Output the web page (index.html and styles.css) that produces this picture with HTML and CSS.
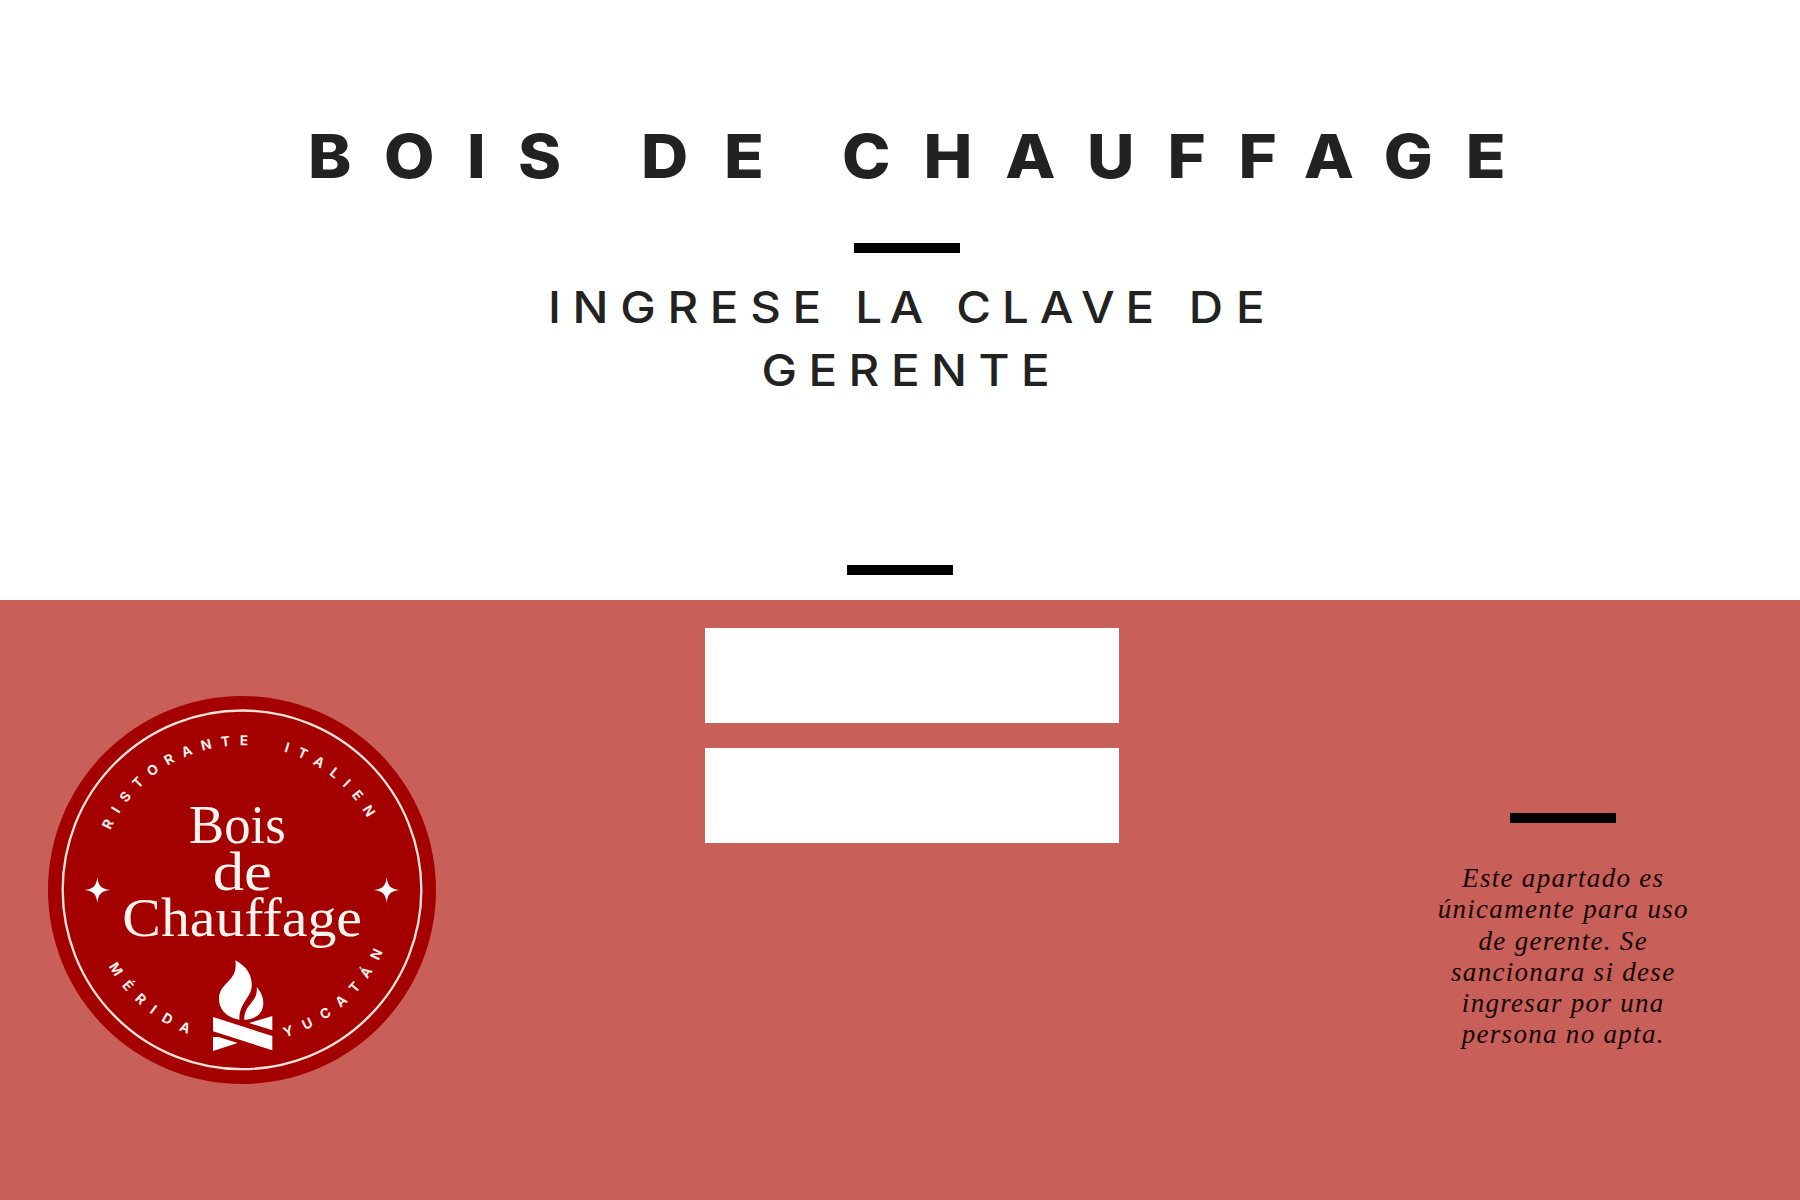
FILE: index.html
```html
<!DOCTYPE html>
<html lang="es">
<head>
<meta charset="utf-8">
<title>Bois de Chauffage</title>
<link rel="stylesheet" href="styles.css">
</head>
<body>
<main class="page">
  <header class="intro">
    <h1 class="title"><span class="title-bois">BOIS</span> <span class="title-de">DE</span> <span class="title-chauffage">CHAUFFAGE</span></h1>
    <div class="rule rule-title"></div>
    <h2 class="subtitle">
      <span class="subtitle-line"><span class="w-ingrese">INGRESE</span> <span class="w-la">LA</span> <span class="w-clave">CLAVE</span> <span class="w-de">DE</span></span>
      <span class="subtitle-line second"><span class="w-gerente">GERENTE</span></span>
    </h2>
    <div class="rule rule-form"></div>
  </header>

  <section class="panel">
    <div class="brand">
      <svg class="logo" viewBox="24 47 1164 1164" role="img" aria-label="Bois de Chauffage">
        <defs>
          <path id="arc-top" d="M172 629A434 434 0 0 1 1040 629"/>
          <path id="arc-bottom" d="M145 629A461 461 0 0 0 1067 629"/>
          <path id="star" d="M0-38C3-12 12-3 38 0C12 3 3 12 0 38C-3 12-12 3-38 0C-12-3-3-12 0-38Z"/>
        </defs>
        <circle class="disc" cx="606" cy="629" r="582"/>
        <circle class="ring" cx="606" cy="628.5" r="538"/>
        <g class="arc-text">
          <text><textPath href="#arc-top" startOffset="185" textLength="515">RISTORANTE</textPath></text>
          <text><textPath href="#arc-top" startOffset="809" textLength="328">ITALIEN</textPath></text>
          <text><textPath href="#arc-bottom" startOffset="239" textLength="319">MÉRIDA</textPath></text>
          <text><textPath href="#arc-bottom" startOffset="855" textLength="403">YUCATÁN</textPath></text>
        </g>
        <text class="name">
          <tspan x="447" y="488" textLength="290" lengthAdjust="spacingAndGlyphs">Bois</tspan>
          <tspan x="518" y="628" textLength="178" lengthAdjust="spacingAndGlyphs">de</tspan>
          <tspan x="247" y="767" textLength="719" lengthAdjust="spacingAndGlyphs">Chauffage</tspan>
        </text>
        <g class="mark">
          <use href="#star" x="172" y="629"/>
          <use href="#star" x="1040" y="629"/>
          <path d="M586 840C624 860 637 890 635 918C634 952 598 966 598 1018C556 1010 537 985 537 955C537 905 596 905 586 840Z"/>
          <path d="M650 920C674 946 674 978 662 996C652 1012 632 1016 613 1019C610 972 656 966 650 920Z"/>
          <path d="M519 1010L697 1067V1110L519 1053ZM697 1007V1050L627 1028ZM519 1070H536L593 1088L519 1112Z"/>
        </g>
      </svg>
    </div>
    <form class="fields">
      <input class="field" type="text" aria-label="Usuario">
      <input class="field" type="password" aria-label="Clave">
    </form>
    <aside class="notice">
      <div class="rule"></div>
      <p class="notice-text">Este apartado es<br>únicamente para uso<br>de gerente. Se<br>sancionara si dese<br>ingresar por una<br>persona no apta.</p>
    </aside>
  </section>
</main>
</body>
</html>
```
FILE: styles.css
```css
* { box-sizing: border-box; }
body { margin: 0; background: #fff; }

.page {
  width: 1800px;
  height: 1200px;
  display: grid;
  grid-template-rows: 600px 600px;
  overflow: hidden;
}

.rule { width: 106px; height: 9.6px; background: #000; }

/* Heading area */
.intro {
  display: flex;
  flex-direction: column;
  padding-top: 119px;
  color: #222;
  font-family: Inter, "Liberation Sans", sans-serif;
}
.title {
  display: flex;
  margin: 0 0 0 307.8px;
  font-size: 60.5px;
  line-height: 74px;
  font-weight: 800;
  transform: scaleX(1.08);
  transform-origin: 0 0;
}
.title-bois { letter-spacing: 30.1px; margin-right: 43.7px; }
.title-de { letter-spacing: 33.2px; margin-right: 39.2px; }
.title-chauffage { letter-spacing: 30.4px; }

.rule-title { margin: 50.4px 0 0 854px; }

.subtitle {
  margin: 23.2px 0 0 548px;
  font-size: 44px;
  line-height: 63px;
  font-weight: 500;
  transform: scaleX(1.08);
  transform-origin: 0 0;
}
.subtitle-line { display: flex; }
.subtitle-line.second { padding-left: 197.6px; }
.w-ingrese { letter-spacing: 10.8px; margin-right: 20.8px; }
.w-la { letter-spacing: 6.7px; margin-right: 24px; }
.w-clave { letter-spacing: 10.1px; margin-right: 21.8px; }
.w-de { letter-spacing: 12px; }
.w-gerente { letter-spacing: 10.65px; }

.rule-form { margin: auto 0 25px 847px; }

/* Red panel */
.panel {
  display: grid;
  grid-template-columns: 704.7px 414.8px 1fr;
  background: #c85f59;
}
.brand { padding: 95.7px 0 0 48px; }
.logo { display: block; width: 388px; height: 388px; }
.disc { fill: #a50000; }
.ring { fill: none; stroke: #fbe3dc; stroke-width: 7; }
.arc-text {
  fill: #fff1ec;
  font: 700 41px Inter, "Liberation Sans", sans-serif;
}
.name {
  fill: #fff4ee;
  font: 166px "Liberation Serif", serif;
}
.mark { fill: #fff; }

.fields {
  display: flex;
  flex-direction: column;
  gap: 25.3px;
  padding-top: 28.2px;
}
.field {
  width: 100%;
  height: 94.8px;
  margin: 0;
  padding: 0 24px;
  border: 0;
  border-radius: 0;
  background: #fff;
  font: 32px Inter, sans-serif;
}

.notice {
  display: flex;
  flex-direction: column;
  align-items: center;
  gap: 40.2px;
  padding: 213.2px 0 0 207px;
}
.notice-text {
  margin: 0;
  color: #150302;
  font: italic 27px/31.27px "Liberation Serif", serif;
  letter-spacing: 1.3px;
  text-align: center;
  white-space: nowrap;
}
```
